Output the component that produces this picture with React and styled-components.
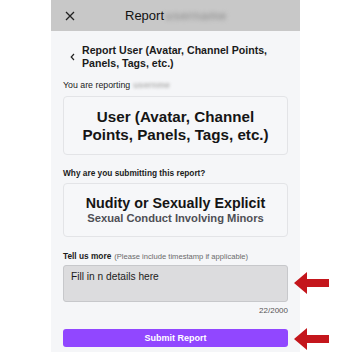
import React from "react";
import styled, { createGlobalStyle } from "styled-components";

const GlobalStyle = createGlobalStyle`
  html, body {
    margin: 0;
    padding: 0;
    background: #ffffff;
    font-family: "Liberation Sans", Arial, sans-serif;
  }
`;

const Page = styled.div`
  position: relative;
  width: 352px;
  height: 352px;
  overflow: hidden;
  background: #ffffff;
`;

const Panel = styled.div`
  width: 249px;
  height: 352px;
  margin-left: 51px;
  background: #f5f6f8;
  display: flex;
  flex-direction: column;
`;

const Header = styled.div`
  flex-shrink: 0;
  height: 31px;
  background: #c8c8c8;
  display: flex;
  align-items: center;
  padding-left: 14px;
`;

const Title = styled.div`
  margin-left: 50px;
  font-size: 13px;
  color: #111;
  display: flex;
  align-items: center;
`;

const Blur = styled.span`
  display: inline-block;
  color: ${(p) => p.$color || "#8a8a8a"};
  font-weight: 700;
  filter: blur(${(p) => p.$blur || 2}px);
  margin-left: ${(p) => p.$gap || 2}px;
`;

const Body = styled.div`
  padding: 13px 12px 0 12px;
  display: flex;
  flex-direction: column;
`;

const BackRow = styled.div`
  display: flex;
  align-items: flex-start;
  padding-left: 7px;
`;

const BackTitle = styled.div`
  margin-left: 7px;
  font-size: 10.6px;
  font-weight: 700;
  line-height: 12.5px;
  color: #1b1b1b;
  white-space: nowrap;
`;

const Label = styled.div`
  font-size: ${(p) => (p.$bold ? 8.3 : 8.8)}px;
  line-height: 11px;
  color: #1b1b1b;
  margin-top: ${(p) => p.$mt || 0}px;
  font-weight: ${(p) => (p.$bold ? 700 : 400)};
  display: flex;
  align-items: center;
  white-space: nowrap;
`;

const Hint = styled.span`
  font-weight: 400;
  font-size: 7.6px;
  color: #6a6a6a;
  margin-left: 3px;
`;

const Card = styled.div`
  margin-top: ${(p) => p.$mt || 5}px;
  height: ${(p) => p.$h}px;
  flex-shrink: 0;
  border: 1px solid #e3e4e7;
  border-radius: 4px;
  background: #f6f7f9;
  display: flex;
  flex-direction: column;
  align-items: center;
  justify-content: center;
  text-align: center;
  box-sizing: border-box;
`;

const CardTitle = styled.div`
  font-size: ${(p) => p.$size || 15}px;
  font-weight: 700;
  line-height: ${(p) => p.$lh || 18}px;
  color: #151515;
`;

const CardSub = styled.div`
  font-size: 11.2px;
  font-weight: 700;
  color: #4e4f55;
  line-height: 14px;
`;

const TextBox = styled.div`
  margin-top: 3.5px;
  height: 37px;
  flex-shrink: 0;
  background: #dcdcde;
  border: 1px solid #c7c8cb;
  border-radius: 3px;
  box-sizing: border-box;
  padding: 5px 7px;
  font-size: 10.2px;
  color: #1b1b1b;
`;

const Counter = styled.div`
  text-align: right;
  font-size: 8px;
  line-height: 10px;
  color: #555;
  margin-top: 4px;
`;

const SubmitButton = styled.button`
  margin-top: 12.5px;
  height: 18px;
  flex-shrink: 0;
  border: none;
  border-radius: 3px;
  background: #9147ff;
  color: #fff;
  font-family: inherit;
  font-size: 9px;
  font-weight: 700;
  padding: 0;
`;

const Arrow = styled.svg`
  position: absolute;
  left: 294px;
  top: ${(p) => p.$top}px;
`;

const RedArrow = ({ top }) => (
  <Arrow $top={top} width="35" height="22" viewBox="0 0 35 22">
    <path d="M0 11 L13 0 L13 7 L35 7 L35 15 L13 15 L13 22 Z" fill="#c4161c" />
  </Arrow>
);

export default function App() {
  return (
    <Page>
      <GlobalStyle />
      <Panel>
        <Header>
          <svg width="10" height="10" viewBox="0 0 10 10">
            <path d="M1 1 L9 9 M9 1 L1 9" stroke="#222" strokeWidth="1.3" />
          </svg>
          <Title>
            Report
            <Blur $gap={1} $blur={2.2} $color="#9d9d9d">username</Blur>
          </Title>
        </Header>
        <Body>
          <BackRow>
            <svg width="5" height="8" viewBox="0 0 5 8" style={{ marginTop: 9 }}>
              <path d="M4 1 L1.2 4 L4 7" stroke="#222" strokeWidth="1.2" fill="none" />
            </svg>
            <BackTitle>
              Report User (Avatar, Channel Points,
              <br />
              Panels, Tags, etc.)
            </BackTitle>
          </BackRow>
          <Label $mt={11}>
            You are reporting
            <Blur $gap={3} $blur={1.6} $color="#b4b4b4">usernme</Blur>
          </Label>
          <Card $h={59} $mt={5}>
            <CardTitle $size={15.2}>
              User (Avatar, Channel
              <br />
              Points, Panels, Tags, etc.)
            </CardTitle>
          </Card>
          <Label $mt={13} $bold>
            Why are you submitting this report?
          </Label>
          <Card $h={54} $mt={4}>
            <CardTitle $size={14.3} $lh={16}>
              Nudity or Sexually Explicit
            </CardTitle>
            <CardSub>Sexual Conduct Involving Minors</CardSub>
          </Card>
          <Label $mt={13.5} $bold>
            Tell us more
            <Hint>(Please include timestamp if applicable)</Hint>
          </Label>
          <TextBox>Fill in n details here</TextBox>
          <Counter>22/2000</Counter>
          <SubmitButton>Submit Report</SubmitButton>
        </Body>
      </Panel>
      <RedArrow top={272} />
      <RedArrow top={328} />
    </Page>
  );
}
